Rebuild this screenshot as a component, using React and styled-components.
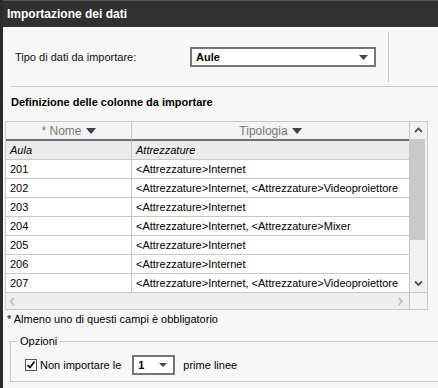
import React from "react";
import styled, { createGlobalStyle } from "styled-components";

const Global = createGlobalStyle`
  html, body { margin: 0; padding: 0; background: #f7f7f7; }
  body { font-family: "Liberation Sans", Arial, sans-serif; }
  * { box-sizing: border-box; }
`;

const Window = styled.div`
  width: 438px;
  height: 388px;
  overflow: hidden;
  background: #f7f7f7;
  border-left: 3px solid #2c2c2c;
  display: flex;
  flex-direction: column;
`;

const TitleBar = styled.div`
  height: 27px;
  flex: none;
  background: #313131;
  border-top: 1px solid #555;
  color: #fff;
  font-weight: bold;
  font-size: 12px;
  display: flex;
  align-items: center;
  padding-left: 4px;
`;

const TopSection = styled.div`
  margin-left: 8px;
  height: 60px;
  border-bottom: 1px solid #c8c8c8;
  display: flex;
  align-items: flex-start;
`;

const TypeArea = styled.div`
  width: 378px;
  height: 50px;
  margin-top: 5px;
  border-right: 1px solid #c8c8c8;
  display: flex;
  align-items: center;
  padding-left: 4px;
`;

const Label = styled.span`
  width: ${(p) => p.$w}px;
  font-size: 11px;
  color: #111;
  flex: none;
`;

const Select = styled.div`
  width: ${(p) => p.$w}px;
  height: 20px;
  border: 2px solid #74747e;
  background: #fff;
  display: flex;
  align-items: center;
  justify-content: space-between;
  padding: 0 6px 0 4px;
  font-size: 11px;
  font-weight: bold;
  color: #000;
  flex: none;
`;

const SectionTitle = styled.div`
  margin: 9px 0 12px 8px;
  font-size: 11px;
  line-height: 13px;
  font-weight: bold;
  color: #000;
`;

const Table = styled.div`
  margin-left: 2px;
  width: 423px;
  border: 1px solid #c8c8c8;
  background: #f4f4f4;
  display: flex;
  flex-direction: column;
`;

const MainRow = styled.div`
  display: flex;
`;

const Grid = styled.div`
  width: 403px;
  display: grid;
  grid-template-columns: 126px 277px;
`;

const HeadCell = styled.div`
  height: 19px;
  background: #f3f3f3;
  border-bottom: 2px solid #6c707b;
  border-right: ${(p) => (p.$last ? "none" : "1px solid #c8c8c8")};
  display: flex;
  align-items: center;
  justify-content: center;
  gap: 4px;
  font-size: 12px;
  color: #7a7a7a;
`;

const Cell = styled.div`
  height: 19px;
  line-height: 18px;
  padding: 0 4px;
  font-size: 11px;
  color: #000;
  white-space: nowrap;
  overflow: hidden;
  background: ${(p) => (p.$sub ? "#ebebeb" : "#fff")};
  font-style: ${(p) => (p.$sub ? "italic" : "normal")};
  border-bottom: 1px solid #c8c8c8;
  border-right: ${(p) => (p.$last ? "none" : "1px solid #c8c8c8")};
`;

const VScroll = styled.div`
  width: 18px;
  border-left: 1px solid #c8c8c8;
  border-bottom: 1px solid #c8c8c8;
  background: #f1f1f1;
  display: flex;
  flex-direction: column;
`;

const ArrowBox = styled.div`
  height: ${(p) => p.$h}px;
  flex: none;
  display: flex;
  align-items: center;
  justify-content: center;
`;

const Thumb = styled.div`
  height: 101px;
  width: 15px;
  background: #c9c9c9;
  flex: none;
`;

const Spacer = styled.div`
  flex: 1;
`;

const HScrollRow = styled.div`
  height: 16px;
  display: flex;
`;

const HTrack = styled.div`
  width: 403px;
  background: #eeeeee;
  display: flex;
  align-items: center;
  justify-content: space-between;
  padding: 0 5px 0 3px;
`;

const Corner = styled.div`
  width: 18px;
  border-left: 1px solid #c8c8c8;
  background: #f4f4f4;
`;

const Note = styled.div`
  margin: 3px 0 0 4px;
  font-size: 11px;
  line-height: 13px;
  color: #000;
`;

const Fieldset = styled.fieldset`
  margin: 9px -20px 0 7px;
  padding: 0 0 6px 0;
  border: 1px solid #c8c8c8;
  min-width: 0;
`;

const Legend = styled.legend`
  margin-left: 6px;
  padding: 0 3px;
  font-size: 11px;
  line-height: 13px;
  color: #000;
`;

const OptionRow = styled.div`
  margin-top: 7px;
  padding-left: 14px;
  display: flex;
  align-items: center;
  height: 20px;
  font-size: 11px;
  color: #000;
`;

const Check = styled.span`
  width: 12px;
  height: 12px;
  border: 1px solid #555;
  background: #fff;
  display: flex;
  align-items: center;
  justify-content: center;
  margin-right: 3px;
  flex: none;
`;

const Text = styled.span`
  margin-right: ${(p) => p.$mr || 0}px;
  margin-left: ${(p) => p.$ml || 0}px;
`;

const Tri = ({ w = 9, h = 5, color = "#444" }) => (
  <svg width={w} height={h} viewBox={`0 0 ${w} ${h}`}>
    <polygon points={`0,0 ${w},0 ${w / 2},${h}`} fill={color} />
  </svg>
);

const Chevron = ({ dir, color }) => {
  const paths = {
    up: "M1 5 L4.5 1.5 L8 5",
    down: "M1 1.5 L4.5 5 L8 1.5",
    left: "M5 1 L1.5 4.5 L5 8",
    right: "M1.5 1 L5 4.5 L1.5 8",
  };
  const vert = dir === "up" || dir === "down";
  return (
    <svg width={vert ? 9 : 7} height={vert ? 7 : 9} viewBox={vert ? "0 0 9 7" : "0 0 7 9"}>
      <path d={paths[dir]} fill="none" stroke={color} strokeWidth="1.8" />
    </svg>
  );
};

const rows = [
  ["201", "<Attrezzature>Internet"],
  ["202", "<Attrezzature>Internet, <Attrezzature>Videoproiettore"],
  ["203", "<Attrezzature>Internet"],
  ["204", "<Attrezzature>Internet, <Attrezzature>Mixer"],
  ["205", "<Attrezzature>Internet"],
  ["206", "<Attrezzature>Internet"],
  ["207", "<Attrezzature>Internet, <Attrezzature>Videoproiettore"],
];

export default function App() {
  return (
    <>
      <Global />
      <Window>
        <TitleBar>Importazione dei dati</TitleBar>
        <TopSection>
          <TypeArea>
            <Label $w={175}>Tipo di dati da importare:</Label>
            <Select $w={186}>
              <span>Aule</span>
              <Tri w={9} h={5} color="#444" />
            </Select>
          </TypeArea>
        </TopSection>
        <SectionTitle>Definizione delle colonne da importare</SectionTitle>
        <Table>
          <MainRow>
            <Grid>
              <HeadCell>
                <span>* Nome</span>
                <Tri w={10} h={6} color="#3f3f3f" />
              </HeadCell>
              <HeadCell $last>
                <span>Tipologia</span>
                <Tri w={10} h={6} color="#3f3f3f" />
              </HeadCell>
              <Cell $sub>Aula</Cell>
              <Cell $sub $last>Attrezzature</Cell>
              {rows.map(([a, b]) => (
                <React.Fragment key={a}>
                  <Cell>{a}</Cell>
                  <Cell $last>{b}</Cell>
                </React.Fragment>
              ))}
            </Grid>
            <VScroll>
              <ArrowBox $h={17}>
                <Chevron dir="up" color="#555" />
              </ArrowBox>
              <Thumb />
              <Spacer />
              <ArrowBox $h={18}>
                <Chevron dir="down" color="#555" />
              </ArrowBox>
            </VScroll>
          </MainRow>
          <HScrollRow>
            <HTrack>
              <Chevron dir="left" color="#c2c2c2" />
              <Chevron dir="right" color="#c2c2c2" />
            </HTrack>
            <Corner />
          </HScrollRow>
        </Table>
        <Note>* Almeno uno di questi campi è obbligatorio</Note>
        <Fieldset>
          <Legend>Opzioni</Legend>
          <OptionRow>
            <Check>
              <svg width="10" height="10" viewBox="0 0 10 10">
                <path d="M1.5 5 L4 7.5 L8.5 1.5" fill="none" stroke="#000" strokeWidth="1.6" />
              </svg>
            </Check>
            <Text $mr={11}>Non importare le</Text>
            <Select $w={43}>
              <span>1</span>
              <Tri w={8} h={4} color="#444" />
            </Select>
            <Text $ml={8}>prime linee</Text>
          </OptionRow>
        </Fieldset>
      </Window>
    </>
  );
}
